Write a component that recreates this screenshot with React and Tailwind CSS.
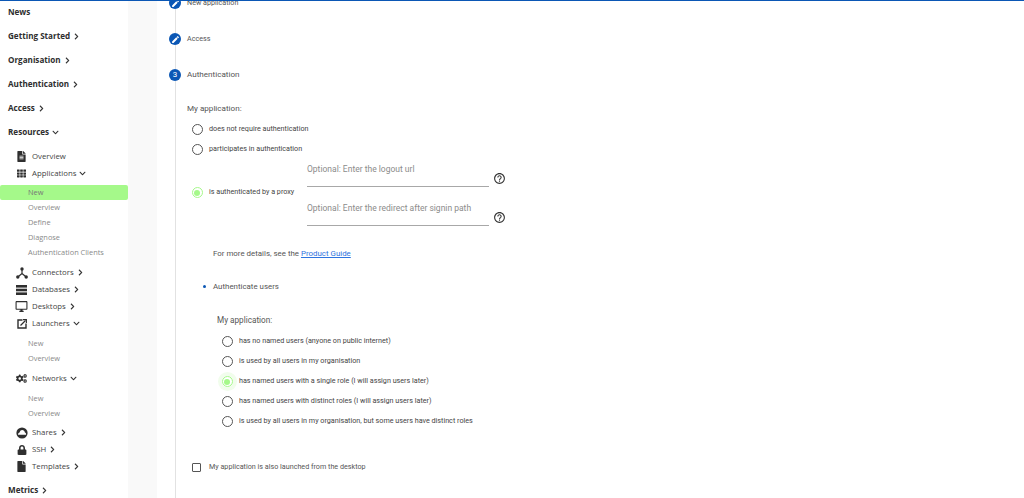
import { FaFileAlt, FaFile, FaLock, FaCogs, FaTh, FaChevronRight, FaChevronDown } from 'react-icons/fa';
import { MdEdit, MdHelpOutline, MdOutlineDesktopWindows } from 'react-icons/md';

const ConnectorIcon = () => (
  <svg width="12" height="12" viewBox="0 0 12 12" fill="#2f2f2f">
    <circle cx="6" cy="2" r="1.7" />
    <circle cx="1.8" cy="10" r="1.7" />
    <circle cx="10.2" cy="10" r="1.7" />
    <path d="M6 2V6.5M6 6.5L1.8 10M6 6.5L10.2 10" stroke="#2f2f2f" strokeWidth="1.2" fill="none" />
  </svg>
);

const CloudIcon = () => (
  <svg width="12" height="12" viewBox="0 0 12 12">
    <circle cx="6" cy="6" r="5.6" fill="#2f2f2f" />
    <path d="M2 7.7C2 6.5 2.8 5.6 3.6 5.5C4 3.8 5 3 6.2 3C7.6 3 8.7 4 8.9 5.5C9.7 5.6 10.2 6.5 10.1 7.7Z" fill="#ffffff" />
  </svg>
);

const DatabaseIcon = () => (
  <svg width="11" height="10" viewBox="0 0 11 10" fill="#2f2f2f">
    <rect x="0" y="0" width="11" height="2.6" />
    <rect x="0" y="3.7" width="11" height="2.6" />
    <rect x="0" y="7.4" width="11" height="2.6" />
  </svg>
);

const LauncherIcon = () => (
  <svg width="10" height="10" viewBox="0 0 10 10" fill="none" stroke="#2f2f2f">
    <path d="M5.5 1H1V9H9V4.5" strokeWidth="1.4" />
    <path d="M3.5 6.5L8.5 1.5" strokeWidth="1.3" />
    <path d="M6 0.6H9.4V4" strokeWidth="1.1" />
  </svg>
);

const Chevron = ({ open }) =>
  open ? <FaChevronDown size={7} className="ml-[3px] text-[#333]" /> : <FaChevronRight size={7} className="ml-[3px] text-[#333]" />;

const TopItem = ({ label, arrow, open }) => (
  <div className="h-6 pl-2 flex items-center text-[8.1px] font-bold text-[#2e2e2e]">
    {label}
    {arrow && <Chevron open={open} />}
  </div>
);

const ResourceItem = ({ icon, label, arrow, open }) => (
  <div className="h-[17px] flex items-center text-[7.8px] font-medium text-[#444]">
    <div className="w-[32px] pl-[11px] flex justify-center">{icon}</div>
    {label}
    {arrow && <Chevron open={open} />}
  </div>
);

const SubItem = ({ label, active }) => (
  <div className={`h-[15px] pl-7 flex items-center text-[7.4px] text-[#8a8a8a] ${active ? 'bg-[#a5f98a] rounded-[2px] text-[#777]' : ''}`}>
    {label}
  </div>
);

const Sidebar = () => (
  <div className="w-[128px] shrink-0 bg-white font-['Open_Sans',sans-serif] -mt-[1px]">
    <TopItem label="News" />
    <TopItem label="Getting Started" arrow />
    <TopItem label="Organisation" arrow />
    <TopItem label="Authentication" arrow />
    <TopItem label="Access" arrow />
    <TopItem label="Resources" arrow open />
    <div className="mt-[4px]">
      <ResourceItem icon={<FaFileAlt size={11} className="text-[#2f2f2f]" />} label="Overview" />
      <ResourceItem icon={<FaTh size={9} className="text-[#2f2f2f]" />} label="Applications" arrow open />
    </div>
    <div className="mt-[3px] mb-[4px]">
      <SubItem label="New" active />
      <SubItem label="Overview" />
      <SubItem label="Define" />
      <SubItem label="Diagnose" />
      <SubItem label="Authentication Clients" />
    </div>
    <ResourceItem icon={<ConnectorIcon />} label="Connectors" arrow />
    <ResourceItem icon={<DatabaseIcon />} label="Databases" arrow />
    <ResourceItem icon={<MdOutlineDesktopWindows size={13} className="text-[#2f2f2f]" />} label="Desktops" arrow />
    <ResourceItem icon={<LauncherIcon />} label="Launchers" arrow open />
    <div className="mt-[4px] mb-[4px]">
      <SubItem label="New" />
      <SubItem label="Overview" />
    </div>
    <ResourceItem icon={<FaCogs size={11} className="text-[#2f2f2f]" />} label="Networks" arrow open />
    <div className="mt-[4px] mb-[3px]">
      <SubItem label="New" />
      <SubItem label="Overview" />
    </div>
    <ResourceItem icon={<CloudIcon />} label="Shares" arrow />
    <ResourceItem icon={<FaLock size={10} className="text-[#2f2f2f]" />} label="SSH" arrow />
    <ResourceItem icon={<FaFile size={11} className="text-[#2f2f2f]" />} label="Templates" arrow />
    <div className="mt-[3px]">
      <TopItem label="Metrics" arrow />
    </div>
  </div>
);

const Step = ({ label, number, small }) => (
  <div className="h-[12px] flex items-center gap-[6px]">
    <div className="w-[12px] h-[12px] rounded-full bg-[#0b57b5] flex items-center justify-center text-white text-[8px]">
      {number || <MdEdit size={9} />}
    </div>
    <span className={small ? 'text-[7.2px] text-[#555]' : 'text-[8.1px] text-[#555] -mt-[1px]'}>{label}</span>
  </div>
);

const Radio = ({ label, checked, halo }) => (
  <div className="flex items-center text-[7.2px] text-[#444]">
    <div className="w-[28px] flex justify-center">
      {checked ? (
        <div className={`w-[11px] h-[11px] rounded-full border border-[#a5f98a] flex items-center justify-center ${halo ? 'shadow-[0_0_0_4px_#f1fdec]' : ''}`}>
          <div className="w-[6px] h-[6px] rounded-full bg-[#a5f98a]" />
        </div>
      ) : (
        <div className="w-[11px] h-[11px] rounded-full border border-[#555]" />
      )}
    </div>
    <span className="-ml-[2px]">{label}</span>
  </div>
);

const OptionalInput = ({ placeholder }) => (
  <div className="flex items-end">
    <div className="w-[182px] h-[34px] border-b border-[#a8a8a8] text-[8.5px] text-[#8c8c8c] pt-[10px]">{placeholder}</div>
    <MdHelpOutline size={13} className="ml-[4px] mb-[2px] text-[#333]" />
  </div>
);

const Main = () => (
  <div className="flex-1 min-w-0 pl-[12px] font-['Roboto',sans-serif] -mt-[4px]">
    <Step label="New application" small />
    <div className="ml-[6px] h-[24px] border-l border-[#e2e2e2]" />
    <Step label="Access" small />
    <div className="ml-[6px] h-[24px] border-l border-[#e2e2e2]" />
    <Step label="Authentication" number="3" />
    <div className="ml-[6px] border-l border-[#e2e2e2] h-[424px] pl-[11px] pt-[21px]">
      <div className="text-[8.1px] text-[#555]">My application:</div>
      <div className="mt-[10px] -ml-[4px] flex flex-col gap-[9px]">
        <Radio label="does not require authentication" />
        <Radio label="participates in authentication" />
      </div>
      <div className="flex items-start -ml-[4px]">
        <div className="w-[124px] mt-[32px]">
          <Radio label="is authenticated by a proxy" checked />
        </div>
        <div className="flex flex-col gap-[5px] -mt-[2px]">
          <OptionalInput placeholder="Optional: Enter the logout url" />
          <OptionalInput placeholder="Optional: Enter the redirect after signin path" />
        </div>
      </div>
      <div className="mt-[22px] ml-[26px] text-[7.9px] text-[#555]">
        For more details, see the <a className="text-[#2f74e0] underline">Product Guide</a>
      </div>
      <div className="mt-[21px] flex items-center text-[7.9px] text-[#555]">
        <div className="ml-[16px] w-[3px] h-[3px] rounded-full bg-[#0b57b5]" />
        <span className="ml-[7px]">Authenticate users</span>
      </div>
      <div className="mt-[21px] ml-[30px] text-[8.2px] text-[#555]">My application:</div>
      <div className="mt-[10px] ml-[26px] flex flex-col gap-[9px]">
        <Radio label="has no named users (anyone on public internet)" />
        <Radio label="is used by all users in my organisation" />
        <Radio label="has named users with a single role (I will assign users later)" checked halo />
        <Radio label="has named users with distinct roles (I will assign users later)" />
        <Radio label="is used by all users in my organisation, but some users have distinct roles" />
      </div>
      <div className="mt-[35px] flex items-center text-[7.2px] text-[#555]">
        <div className="ml-[5px] w-[9px] h-[9px] border border-[#555] rounded-[1px]" />
        <span className="ml-[8px]">My application is also launched from the desktop</span>
      </div>
    </div>
  </div>
);

const App = () => (
  <div className="h-[498px] w-[1024px] overflow-hidden border-t border-[#0b57b5] flex bg-white">
    <Sidebar />
    <div className="w-[29px] shrink-0 bg-[#f9f9f9]" />
    <Main />
  </div>
);

export default App;
